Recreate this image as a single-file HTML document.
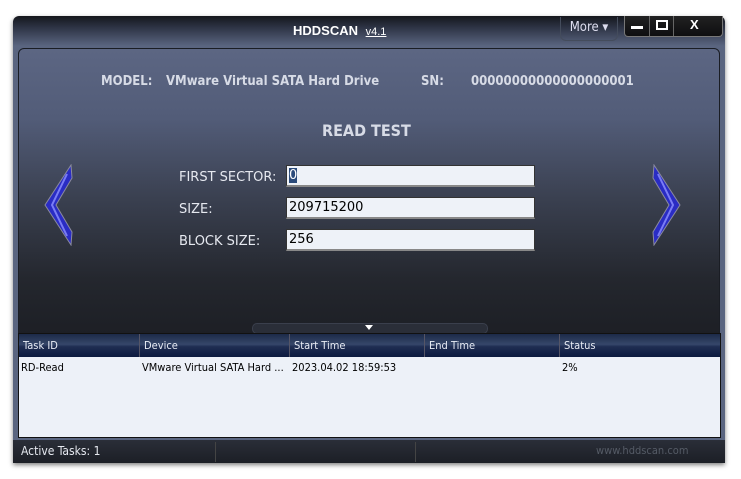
<!DOCTYPE html><html><head><style>
body{margin:0;width:741px;height:479px;background:#fff;position:relative;overflow:hidden;font-family:"DejaVu Sans Condensed","Liberation Sans",sans-serif}
.win{position:absolute;left:13px;top:16px;width:712px;height:447px;background:linear-gradient(#15171c 0,#2a3040 10px,#5a6580 30px,#5a6580 40px);border-radius:6px 6px 0 0;box-shadow:0 2px 5px rgba(0,0,0,.5)}
.abs{position:absolute}
.panel{left:5px;top:32px;width:700px;height:285px;border:1px solid #1a1d24;border-radius:6px 6px 0 0;background:linear-gradient(#5c6683 0,#525c78 70px,#3a4050 150px,#24272e 230px,#1d1f25 285px)}
.t{color:#d7dbe6;font-weight:bold;font-size:13px}
.lbl{color:#e6e9f0;font-size:13px;font-family:"DejaVu Sans","Liberation Sans",sans-serif}
.inp{background:#eef2f8;border:1px solid #333;border-bottom:2px solid #888;width:249px;height:22px;font-size:13px;font-family:"DejaVu Sans",sans-serif;line-height:19px;padding-left:2px;box-sizing:border-box;color:#000}
.grid{left:5px;top:317px;width:701px;height:103px;background:#edf1f8;border:1px solid #111}
.hd{position:absolute;top:0;height:23px;background:linear-gradient(#1c2a48,#36476a 45%,#1f2d52 55%,#0c1a40);color:#e8ecf5;font-size:11px;line-height:24px;padding-left:4px;box-sizing:border-box;border-right:1px solid #556}
.cell{position:absolute;top:27px;font-size:11px;color:#000;white-space:nowrap}
.sb{left:0;top:424px;width:712px;height:23px;background:linear-gradient(#2a2e38,#1c1f26);font-size:12px;color:#e6e9f0}
</style></head><body>
<div class="win">
 <div class="abs" style="left:280px;top:7px;color:#fff;font-weight:bold;font-size:13px;font-family:'Liberation Sans',sans-serif">HDDSCAN <span style="font-weight:normal;font-size:11px;text-decoration:underline;margin-left:4px">v4.1</span></div>
 <div class="abs" style="left:547px;top:1px;width:56px;height:23px;border:1px solid #444c5c;border-top:none;border-radius:0 0 6px 6px;color:#dde;font-size:13px;text-align:center;line-height:22px">More ▾</div>
 <div class="abs" style="left:611px;top:0;width:97px;height:20px;background:linear-gradient(#222,#0e0e10);border:1px solid #777;border-top:none;border-radius:0 0 4px 4px"></div>
 <div class="abs" style="left:618px;top:10px;width:12px;height:3px;background:#fff"></div>
 <div class="abs" style="left:643px;top:4px;width:8px;height:6px;border:2px solid #fff"></div>
 <div class="abs" style="left:636px;top:0;width:1px;height:20px;background:#666"></div>
 <div class="abs" style="left:660px;top:0;width:1px;height:20px;background:#666"></div>
 <div class="abs" style="left:677px;top:1px;color:#fff;font-weight:bold;font-size:13px;font-family:'Liberation Sans',sans-serif">X</div>
 <div class="abs panel">
  <div class="abs t" style="left:82px;top:25px">MODEL:</div>
  <div class="abs t" style="left:147px;top:25px">VMware Virtual SATA Hard Drive</div>
  <div class="abs t" style="left:402px;top:25px">SN:</div>
  <div class="abs t" style="left:452px;top:25px">00000000000000000001</div>
  <div class="abs t" style="left:303px;top:72px;font-size:16px">READ TEST</div>
  <svg class="abs" style="left:24px;top:115px" width="32" height="82"><path d="M28 1 L2 41 L28 81 L29 68 L13 41 L29 14Z" fill="#2a2cc4" stroke="#8a8aa0" stroke-width="1"/><path d="M24 10 L9 41 L24 72" stroke="#7a7cf5" stroke-width="2" fill="none"/></svg>
  <svg class="abs" style="left:631px;top:115px" width="32" height="82"><path d="M4 1 L30 41 L4 81 L3 68 L19 41 L3 14Z" fill="#2a2cc4" stroke="#8a8aa0" stroke-width="1"/><path d="M8 10 L23 41 L8 72" stroke="#7a7cf5" stroke-width="2" fill="none"/></svg>
  <div class="abs lbl" style="left:160px;top:121px">FIRST SECTOR:</div>
  <div class="abs lbl" style="left:160px;top:153px">SIZE:</div>
  <div class="abs lbl" style="left:160px;top:185px">BLOCK SIZE:</div>
  <div class="abs inp" style="left:267px;top:116px"><span style="background:#2a4a7a;color:#fff">0</span></div>
  <div class="abs inp" style="left:267px;top:148px">209715200</div>
  <div class="abs inp" style="left:267px;top:180px">256</div>
 </div>
 <div class="abs" style="left:239px;top:307px;width:234px;height:9px;background:#2a2e38;border:1px solid #3a3f4c;border-radius:5px"></div>
 <div class="abs" style="left:352px;top:309px;width:0;height:0;border-left:4px solid transparent;border-right:4px solid transparent;border-top:5px solid #fff"></div>
 <div class="abs grid">
  <div class="hd" style="left:0;width:121px">Task ID</div>
  <div class="hd" style="left:121px;width:150px">Device</div>
  <div class="hd" style="left:271px;width:135px">Start Time</div>
  <div class="hd" style="left:406px;width:135px">End Time</div>
  <div class="hd" style="left:541px;width:160px;border-right:none">Status</div>
  <div class="cell" style="left:2px">RD-Read</div>
  <div class="cell" style="left:123px">VMware Virtual SATA Hard ...</div>
  <div class="cell" style="left:273px">2023.04.02 18:59:53</div>
  <div class="cell" style="left:543px">2%</div>
 </div>
 <div class="abs sb">
  <div class="abs" style="left:8px;top:4px">Active Tasks: 1</div>
  <div class="abs" style="left:202px;top:2px;width:1px;height:20px;background:#444"></div>
  <div class="abs" style="left:402px;top:2px;width:1px;height:20px;background:#444"></div>
  <div class="abs" style="left:583px;top:4px;color:#555b66;font-size:11px">www.hddscan.com</div>
 </div>
</div>
</body></html>
